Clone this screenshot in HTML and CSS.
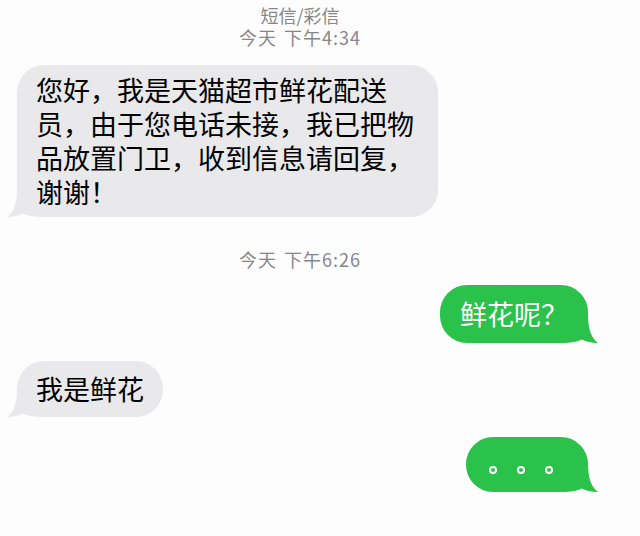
FILE: index.html
```html
<!DOCTYPE html>
<html lang="zh-CN">
<head>
<meta charset="utf-8">
<title>短信/彩信</title>
<link rel="stylesheet" href="styles.css">
</head>
<body>
<div class="thread">
  <div class="stamp stamp-top">
    <div class="stamp-title">短信/彩信</div>
    <div class="stamp-time">今天 下午4:34</div>
  </div>

  <div class="bubble in multi">
    <span class="text">您好，我是天猫超市鲜花配送员，由于您电话未接，我已把物品放置门卫，收到信息请回复，谢谢！</span>
    <svg class="tail tail-in" width="40" height="30" viewBox="0 0 40 30"><path d="M12 0 C12 14 10 24 2 30 C9 30 14 28.5 18 26.5 C23 29 30 30 40 30 L40 0 Z"/></svg>
  </div>

  <div class="stamp stamp-mid">
    <div class="stamp-time">今天 下午6:26</div>
  </div>

  <div class="bubble out first-out">
    <span class="text">鲜花呢？</span>
    <svg class="tail tail-out" width="40" height="30" viewBox="0 0 40 30"><path d="M12 0 C12 14 10 24 2 30 C9 30 14 28.5 18 26.5 C23 29 30 30 40 30 L40 0 Z"/></svg>
  </div>

  <div class="bubble in single">
    <span class="text">我是鲜花</span>
    <svg class="tail tail-in" width="40" height="30" viewBox="0 0 40 30"><path d="M12 0 C12 14 10 24 2 30 C9 30 14 28.5 18 26.5 C23 29 30 30 40 30 L40 0 Z"/></svg>
  </div>

  <div class="bubble out typing">
    <span class="dot"></span><span class="dot"></span><span class="dot"></span>
    <svg class="tail tail-out" width="40" height="30" viewBox="0 0 40 30"><path d="M12 0 C12 14 10 24 2 30 C9 30 14 28.5 18 26.5 C23 29 30 30 40 30 L40 0 Z"/></svg>
  </div>
</div>
</body>
</html>
```
FILE: styles.css
```css
html, body {
  margin: 0;
  padding: 0;
  background: #fdfdfd;
}
body {
  width: 640px;
  height: 536px;
  overflow: hidden;
  font-family: "Noto Sans CJK SC", "Noto Sans", sans-serif;
}
.thread {
  display: flex;
  flex-direction: column;
  align-items: flex-start;
}
.stamp {
  width: 600px;
  text-align: center;
  color: #86868a;
  font-size: 18px;
  line-height: 22px;
}
.stamp-time {
  letter-spacing: 1px;
  word-spacing: 2px;
}
.stamp-top {
  padding-top: 4px;
}
.stamp-mid {
  margin-top: 31px;
}
.bubble {
  position: relative;
  box-sizing: border-box;
  font-size: 27px;
  line-height: 34px;
  font-weight: 400;
  border-radius: 27px;
}
.bubble .text {
  position: relative;
  z-index: 1;
}
.in {
  background: #e9e9eb;
  color: #000000;
  margin-left: 17px;
}
.out {
  background: #2bc24b;
  color: #ffffff;
  align-self: flex-end;
  margin-right: 52px;
}
.multi {
  margin-top: 17px;
  width: 421px;
  padding: 8px 20px 8px 19px;
  line-break: strict;
}
.first-out {
  margin-top: 15px;
  padding: 12px 20px;
}
.single {
  margin-top: 18px;
  padding: 11px 19px;
}
.typing {
  margin-top: 20px;
  width: 122px;
  height: 55px;
  display: flex;
  align-items: flex-start;
  gap: 20px;
  padding: 29px 0 0 23px;
}
.dot {
  position: relative;
  z-index: 1;
  width: 8px;
  height: 8px;
  box-sizing: border-box;
  border: 2px solid #ffffff;
  border-radius: 50%;
}
.tail {
  position: absolute;
  bottom: 0;
  display: block;
}
.tail-in {
  left: -12px;
}
.tail-in path {
  fill: #e9e9eb;
}
.tail-out {
  right: -12px;
  transform: scaleX(-1);
}
.tail-out path {
  fill: #2bc24b;
}
```
